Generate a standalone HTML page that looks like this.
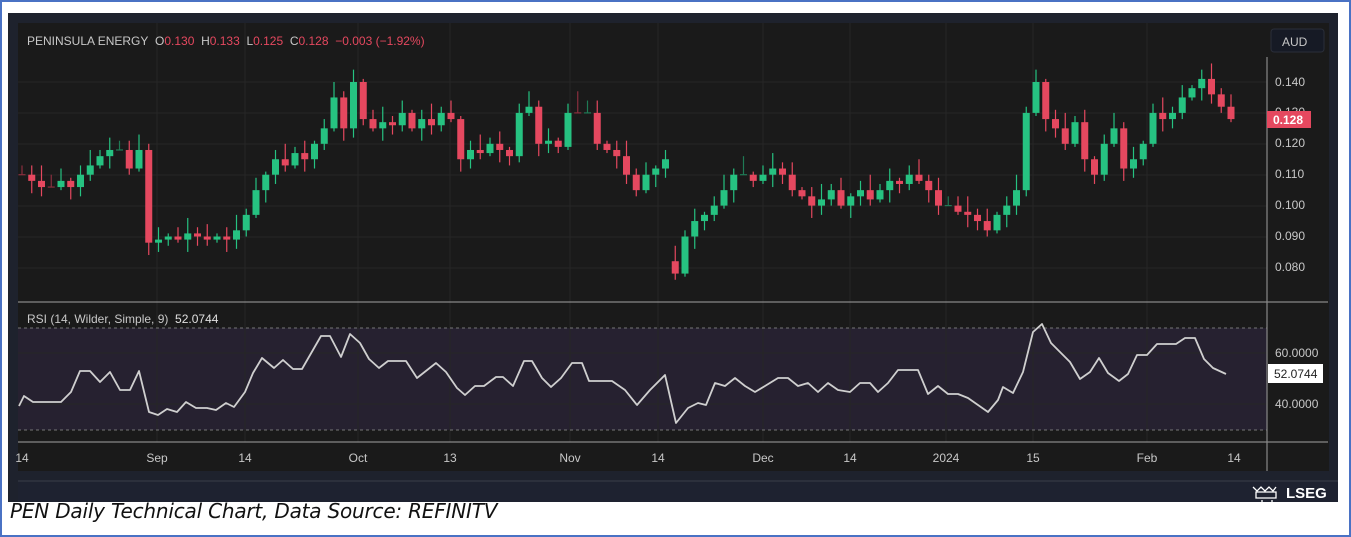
<!DOCTYPE html>
<html><head><meta charset="utf-8"><style>
html,body{margin:0;padding:0;background:#fff;}
body{width:1351px;height:537px;position:relative;overflow:hidden;font-family:"Liberation Sans",sans-serif;}
#frame{position:absolute;left:0;top:0;width:1347px;height:533px;border:2px solid #4a72c4;}
svg{position:absolute;left:0;top:0;}
.cap{position:absolute;left:10px;top:499px;font-family:"DejaVu Sans","Liberation Sans",sans-serif;font-style:italic;font-size:20px;color:#111;letter-spacing:-0.2px;}
</style></head><body>
<div id="frame"></div>
<svg id="s" width="1351" height="537" xmlns="http://www.w3.org/2000/svg" font-family="Liberation Sans, sans-serif">
<rect x="8" y="13" width="1330" height="489" fill="#1e222d"/>
<rect x="18" y="23" width="1311" height="448" fill="#1a1a1a"/>
<rect x="18" y="482" width="1320" height="20" fill="#1e2230"/>
<line x1="18" y1="481" x2="1338" y2="481" fill="none" stroke="#3a3f4b" stroke-width="1"/>
<rect x="18" y="328" width="1249" height="102" fill="#262130"/>
<g id="grid" stroke="#262626" stroke-width="1"></g>
<line x1="18" y1="328" x2="1267" y2="328" stroke="#777" stroke-dasharray="3,3"/>
<line x1="18" y1="430" x2="1267" y2="430" stroke="#777" stroke-dasharray="3,3"/>
<line x1="18" y1="302" x2="1328" y2="302" stroke="#888" stroke-width="1.2"/>
<line x1="18" y1="442" x2="1328" y2="442" stroke="#888" stroke-width="1.2"/>
<line x1="1267" y1="57" x2="1267" y2="471" stroke="#888" stroke-width="1.2"/>
<g id="candles"></g>
<polyline id="rsi" fill="none" stroke="#cfcfcf" stroke-width="1.8" stroke-linejoin="round"/>
<text x="27" y="45" font-size="12" fill="#c8c8c8">PENINSULA ENERGY&#160;&#160;O<tspan fill="#e5485f">0.130</tspan>&#160;&#160;H<tspan fill="#e5485f">0.133</tspan>&#160;&#160;L<tspan fill="#e5485f">0.125</tspan>&#160;&#160;C<tspan fill="#e5485f">0.128</tspan>&#160;&#160;<tspan fill="#e5485f">−0.003 (−1.92%)</tspan></text>
<rect x="1271" y="29" width="53" height="23" rx="3" fill="#161a25" stroke="#2a2e39"/>
<text x="1282" y="46" font-size="12" fill="#c8c8c8">AUD</text>
<g font-size="12" fill="#c8c8c8">
<text x="1275" y="86">0.140</text><text x="1275" y="116">0.130</text><text x="1275" y="147">0.120</text>
<text x="1275" y="178">0.110</text><text x="1275" y="209">0.100</text><text x="1275" y="240">0.090</text><text x="1275" y="271">0.080</text>
<text x="1275" y="357">60.0000</text><text x="1275" y="408">40.0000</text>
</g>
<rect x="1267" y="111" width="44" height="17" fill="#e5485f"/>
<text x="1273" y="124" font-size="12" fill="#fff" font-weight="bold">0.128</text>
<rect x="1268" y="364" width="55" height="19" fill="#fff"/>
<text x="1274" y="378" font-size="12" fill="#222">52.0744</text>
<text x="27" y="323" font-size="12" fill="#c8c8c8">RSI (14, Wilder, Simple, 9)&#160;&#160;<tspan fill="#e0e0e0">52.0744</tspan></text>
<g font-size="12" fill="#c8c8c8" text-anchor="middle">
<text x="22" y="462">14</text><text x="157" y="462">Sep</text><text x="245" y="462">14</text><text x="358" y="462">Oct</text>
<text x="450" y="462">13</text><text x="570" y="462">Nov</text><text x="658" y="462">14</text><text x="763" y="462">Dec</text>
<text x="850" y="462">14</text><text x="946" y="462">2024</text><text x="1033" y="462">15</text><text x="1147" y="462">Feb</text><text x="1234" y="462">14</text>
</g>
<text x="1286" y="498" font-size="15" fill="#fff" font-weight="bold">LSEG</text>
<g stroke="#fff" stroke-width="1.3" fill="none"><path d="M1253 487 l4 4 l4 -4 l4 4 l4 -4 l4 4 l3 -4 M1256 492 h20 v6 h-20 z M1262 500 v2 M1272 500 v2"/></g>
</svg>
<div class="cap">PEN Daily Technical Chart, Data Source: REFINITV</div>
<script>
var ns="http://www.w3.org/2000/svg";
function el(t,a,p){var e=document.createElementNS(ns,t);for(var k in a)e.setAttribute(k,a[k]);p.appendChild(e);return e;}
var g=document.getElementById('grid');
[82,113,144,175,206,237,268].forEach(function(y){el('line',{x1:18,y1:y,x2:1267,y2:y},g);});
[353,404].forEach(function(y){el('line',{x1:18,y1:y,x2:1267,y2:y},g);});
[157,245,358,450,570,658,763,850,946,1033,1147].forEach(function(x){el('line',{x1:x,y1:23,x2:x,y2:442},g);});
function Y(p){return 82+(140-p)*3.09;}
var c=[110,108,106,106,108,106,110,113,116,118,118,112,118,88,89,90,89,91,90,89,90,89,92,97,105,110,115,113,117,115,120,125,135,125,140,128,125,127,126,130,125,128,126,130,128,115,118,117,120,118,116,130,132,120,121,119,130,130,130,120,118,116,110,105,110,112,115,78,90,95,97,100,105,110,110,108,110,112,110,105,103,100,102,105,100,103,105,102,105,108,107,110,108,105,100,100,98,97,95,92,97,100,105,130,140,128,125,120,127,115,110,120,125,112,115,120,130,128,130,135,138,141,136,132,128];
var cg=document.getElementById('candles');
var prev=110;
for(var i=0;i<c.length;i++){
 var x=22+9.75*i,o=prev,cl=c[i];
 if(i==67)o=82; if(i==13)o=118;
 var up=cl>=o,col=up?'#26c281':'#e5485f';
 var hi=Math.max(o,cl)+((i*7)%5)+1,lo=Math.min(o,cl)-((i*3)%4)-1;
 if(o==cl){col=((i%3)?'#1f7a55':'#8a2f3e');el('line',{x1:x,y1:Y(hi+2),x2:x,y2:Y(cl),stroke:col,'stroke-width':1.2},cg);el('line',{x1:x-3.5,y1:Y(cl),x2:x+3.5,y2:Y(cl),stroke:col,'stroke-width':1.2},cg);}
 else{el('line',{x1:x,y1:Y(hi),x2:x,y2:Y(lo),stroke:col,'stroke-width':1.2},cg);
 el('rect',{x:x-3.5,y:Y(Math.max(o,cl)),width:7,height:Math.max(2,Math.abs(o-cl)*3.09),fill:col},cg);}
 prev=cl;
}
var pts="19,406 24,396 33,402 61,402 71,392 80,371 90,371 100,382 110,372 120,390 130,390 139,371 149,412 158,415 167,409 177,412 186,402 196,408 207,408 216,410 226,403 234,407 245,392 253,373 262,358 274,368 283,360 293,369 302,369 321,336 330,336 341,357 350,334 360,343 369,359 379,368 388,361 406,361 417,378 436,363 446,372 457,388 465,395 475,386 484,386 496,377 503,377 513,386 524,361 532,361 542,378 551,387 561,378 572,363 582,363 589,381 600,381 612,381 625,390 637,405 650,390 665,375 676,423 688,408 698,403 706,405 715,383 725,386 735,378 745,386 755,392 765,386 778,378 788,378 798,386 808,383 818,392 828,383 838,390 850,392 860,383 870,383 878,392 888,383 898,370 918,370 928,394 938,386 948,394 958,394 968,398 978,405 988,412 998,400 1003,387 1013,393 1023,372 1033,332 1042,324 1051,343 1070,362 1080,379 1090,372 1099,358 1108,373 1119,381 1128,374 1137,355 1147,355 1157,344 1176,344 1185,338 1195,338 1204,359 1213,368 1226,374";
document.getElementById('rsi').setAttribute('points',pts);
</script>
</body></html>
